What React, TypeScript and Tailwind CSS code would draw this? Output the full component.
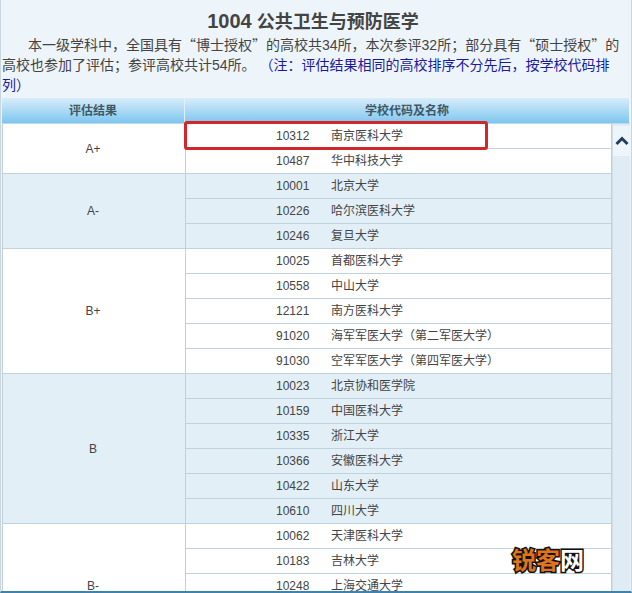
const font = "font-['Liberation_Sans','Noto_Sans_CJK_SC',sans-serif]";

type Group = { grade: string; alt: boolean; tall?: boolean; schools: [string, string][] };

const groups: Group[] = [
  { grade: 'A+', alt: false, schools: [['10312', '南京医科大学'], ['10487', '华中科技大学']] },
  { grade: 'A-', alt: true, schools: [['10001', '北京大学'], ['10226', '哈尔滨医科大学'], ['10246', '复旦大学']] },
  {
    grade: 'B+',
    alt: false,
    schools: [
      ['10025', '首都医科大学'],
      ['10558', '中山大学'],
      ['12121', '南方医科大学'],
      ['91020', '海军军医大学（第二军医大学）'],
      ['91030', '空军军医大学（第四军医大学）'],
    ],
  },
  {
    grade: 'B',
    alt: true,
    schools: [
      ['10023', '北京协和医学院'],
      ['10159', '中国医科大学'],
      ['10335', '浙江大学'],
      ['10366', '安徽医科大学'],
      ['10422', '山东大学'],
      ['10610', '四川大学'],
    ],
  },
  // this group runs past the bottom of the window
  { grade: 'B-', alt: false, tall: true, schools: [['10062', '天津医科大学'], ['10183', '吉林大学'], ['10248', '上海交通大学']] },
];

function GradeGroup({ group }: { group: Group }) {
  const bg = group.alt ? 'bg-[#e3eff6]' : 'bg-white';
  return (
    <div className={`flex ${bg} ${group.tall ? 'h-[125px]' : ''}`}>
      <div className="flex w-[183px] shrink-0 items-center justify-center border-r border-b border-r-[#c4d0d8] border-b-[#bfd2de] pr-[2px] text-[12px] text-[#444]">
        {group.grade}
      </div>
      <div className="flex-1">
        {group.schools.map(([code, name]) => (
          <div key={code} className="flex h-[25px] items-center border-b border-[#bfd2de] text-[12px] text-[#444]">
            <span className="ml-[90px] w-[55px]">{code}</span>
            <span>{name}</span>
          </div>
        ))}
      </div>
    </div>
  );
}

function Quote({ children }: { children: string }) {
  return <span className="font-['Noto_Sans_CJK_SC',sans-serif] leading-none">{children}</span>;
}

export default function App() {
  return (
    <div className={`relative h-[593px] w-[632px] overflow-hidden border-x border-b-2 border-x-[#c9d6df] border-b-[#3d83ad] bg-[#eef5fa] ${font}`}>
      <h1 className="pt-[9px] pr-[6px] text-center text-[18px] leading-[24px] font-bold text-[#444]">
        <span className="text-[20px]">1004</span> 公共卫生与预防医学
      </h1>
      <p className="mt-[1px] pr-[6px] pl-[1px] text-[14px] leading-[20px] text-[#444]">
        <span className="ml-[26px]">
          本一级学科中，全国具有<Quote>“</Quote>博士授权<Quote>”</Quote>的高校共34所，本次参评32所；部分具有<Quote>“</Quote>硕士授权<Quote>”</Quote>的高校也参加了评估；参评高校共计54所。
        </span>{' '}
        <span className="text-[#1a1a9c]">（注：评估结果相同的高校排序不分先后，按学校代码排列）</span>
      </p>
      <div className="mt-[3px] ml-[1px] flex h-[25px] w-[627px] bg-gradient-to-b from-[#d8ecf9] to-[#7cc6f0] text-[12px] font-bold text-[#3f5866]">
        <div className="flex w-[183px] items-center justify-center border-r border-[#e3eff6]">评估结果</div>
        <div className="flex flex-1 items-center justify-center">学校代码及名称</div>
      </div>
      <div className="ml-[1px] flex w-[628px] border-t border-[#c2d8e6]">
        <div className="w-[610px] border-x border-[#c4d0d8]">
          {groups.map((g) => (
            <GradeGroup key={g.grade} group={g} />
          ))}
        </div>
        <div className="w-[18px] border-l border-[#d2dfe8] bg-[#dfebf5]">
          <div className="mt-[2px] flex h-[30px] items-center justify-center bg-[#eef5fa]">
            <svg width="14" height="10" viewBox="0 0 14 10" fill="none">
              <path d="M1.5 8 L7 2.5 L12.5 8" stroke="#1e3f5e" strokeWidth="3" />
            </svg>
          </div>
        </div>
      </div>
      {/* red mark drawn over the first row */}
      <div className="absolute top-[121px] left-[183px] h-[29px] w-[304px] rounded-[3px] border-[3px] border-[#d0272b]" />
      {/* watermark */}
      <div className="absolute top-[547px] left-[511px] flex text-[24px] leading-[28px] font-bold [-webkit-text-stroke:3px_#111] [paint-order:stroke_fill]">
        <span className="text-[#e0741c]">锐客</span>
        <span className="text-white">网</span>
      </div>
    </div>
  );
}
